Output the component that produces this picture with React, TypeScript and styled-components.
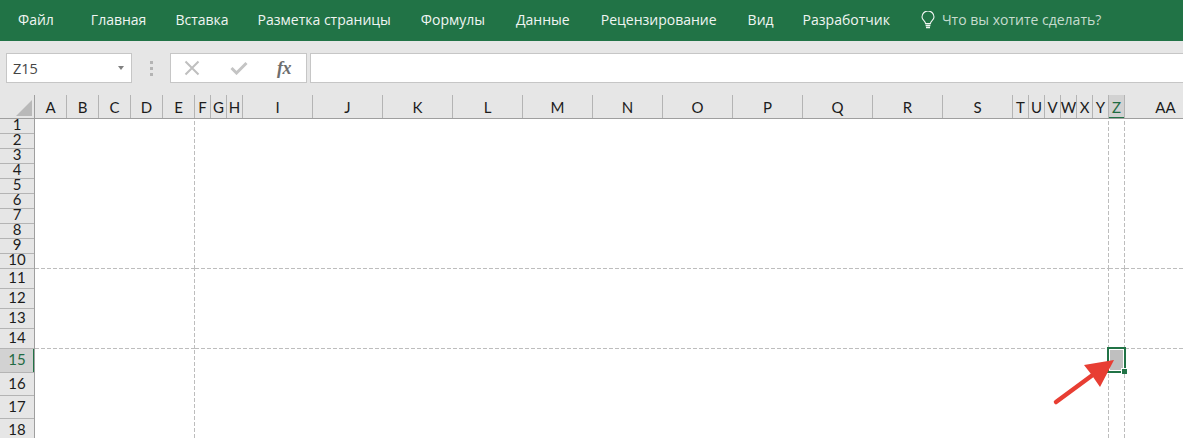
import React from "react";
import styled, { createGlobalStyle } from "styled-components";

const GlobalStyle = createGlobalStyle`
  html, body {
    margin: 0;
    height: 438px;
    overflow: hidden;
    background: #fff;
  }
`;

const Page = styled.div`
  width: 1183px;
  height: 438px;
  overflow: hidden;
  position: relative;
  display: flex;
  flex-direction: column;
`;

const Ribbon = styled.nav`
  height: 41px;
  flex: none;
  box-sizing: border-box;
  background: #217346;
  display: flex;
  align-items: center;
  padding: 0 0 2px 18px;
  font: 14px "Open Sans", "Noto Sans", sans-serif;
  color: #f0f5f2;
`;

const Tab = styled.span<{ $after: number }>`
  margin-right: ${p => p.$after}px;
  white-space: nowrap;
`;

const Tell = styled.span`
  display: flex;
  align-items: center;
  gap: 7px;
  color: #c6dccf;
`;

const Toolbar = styled.div`
  height: 54px;
  flex: none;
  background: #e6e6e6;
  box-sizing: border-box;
  padding: 12px 0 12px 6px;
  display: flex;
  align-items: stretch;
`;

const Field = styled.div<{ $width?: number }>`
  box-sizing: border-box;
  background: #fff;
  border: 1px solid #c6c6c6;
  display: flex;
  align-items: center;
  ${p => (p.$width ? `width: ${p.$width}px;` : "flex: 1; margin-right: -2px;")}
`;

const NameBox = styled(Field)`
  justify-content: space-between;
  padding: 0 7px 0 6px;
  font: 14.5px "Open Sans", "Noto Sans", sans-serif;
  color: #444;
`;

const Caret = styled.i`
  width: 0;
  height: 0;
  border-left: 3.5px solid transparent;
  border-right: 3.5px solid transparent;
  border-top: 4px solid #808080;
`;

const Grip = styled.div`
  width: 38px;
  display: flex;
  flex-direction: column;
  align-items: center;
  justify-content: center;
  gap: 3px;
  i {
    width: 3px;
    height: 3px;
    background: #b4b4b4;
  }
`;

const Buttons = styled(Field)`
  justify-content: space-between;
  padding: 0 15px 0 13px;
  margin-right: 3px;
`;

const Fx = styled.span`
  font: italic bold 18px "Liberation Serif", serif;
  color: #6e6e6e;
  letter-spacing: -0.5px;
`;

const Sheet = styled.div`
  flex: 1;
  display: grid;
  grid-template-columns: 35px 1fr;
  grid-template-rows: 24px 1fr;
  min-height: 0;
`;

const Corner = styled.div`
  background: #e6e6e6;
  box-sizing: border-box;
  border-right: 1px solid #9f9f9f;
  border-bottom: 1px solid #9f9f9f;
  display: flex;
  align-items: flex-end;
  justify-content: flex-end;
  padding: 0 2px 2px 0;
`;

const ColHeads = styled.div`
  display: flex;
  overflow: hidden;
  background: #e6e6e6;
  box-sizing: border-box;
  border-bottom: 1px solid #9f9f9f;
`;

const ColHead = styled.div<{ $width: number; $active?: boolean }>`
  flex: none;
  width: ${p => p.$width}px;
  box-sizing: border-box;
  border-right: 1px solid #b4b4b4;
  display: flex;
  align-items: center;
  justify-content: center;
  font: 15px Lato, "Liberation Sans", sans-serif;
  color: ${p => (p.$active ? "#1f6b43" : "#1c1c1c")};
  background: ${p => (p.$active ? "#d2d2d2" : "transparent")};
  ${p => (p.$active ? "box-shadow: 0 1px 0 #217346, inset 0 -1px 0 #217346;" : "")}
`;

const RowHeads = styled.div`
  background: #e6e6e6;
  box-sizing: border-box;
  border-right: 1px solid #9f9f9f;
  overflow: hidden;
`;

const RowHead = styled.div<{ $height: number; $active?: boolean }>`
  height: ${p => p.$height}px;
  box-sizing: border-box;
  padding-bottom: ${p => (p.$height < 20 ? 4 : 2)}px;
  border-bottom: 1px solid #b4b4b4;
  display: flex;
  align-items: center;
  justify-content: center;
  font: 15px/13px Lato, "Liberation Sans", sans-serif;
  color: ${p => (p.$active ? "#1f6b43" : "#1c1c1c")};
  background: ${p => (p.$active ? "#d2d2d2" : "transparent")};
  ${p => (p.$active ? "box-shadow: inset -1px 0 0 #217346, 1px 0 0 #217346;" : "")}
`;

const Panes = styled.div`
  display: grid;
  grid-template-columns: 160px 914px 16px 1fr;
  grid-template-rows: 150px 80px 1fr;
  background: #fff;
  min-height: 0;
`;

const dashH = "repeating-linear-gradient(90deg, #bdbdbd 0 4px, transparent 4px 6px)";
const dashV = "repeating-linear-gradient(0deg, #bdbdbd 0 4px, transparent 4px 6px)";

const Pane = styled.div<{ $right: boolean; $bottom: boolean }>`
  background-image: ${p => (p.$right ? dashV : "none")}, ${p => (p.$bottom ? dashH : "none")};
  background-size: 1px 100%, 100% 1px;
  background-position: right top, left bottom;
  background-repeat: no-repeat;
`;

const Selection = styled.div`
  position: absolute;
  left: 1107px;
  top: 347px;
  width: 19px;
  height: 26px;
  box-sizing: border-box;
  border: 2px solid #217346;
  background: #bfbfbf;
  box-shadow: inset 0 0 0 1px #fff;
  &::after {
    content: "";
    position: absolute;
    right: -3px;
    bottom: -3px;
    width: 5px;
    height: 5px;
    background: #217346;
    border: 1px solid #fff;
    border-right: 0;
    border-bottom: 0;
  }
`;

const Arrow = styled.svg`
  position: absolute;
  left: 1040px;
  top: 350px;
`;

const tabs: [string, number][] = [
  ["Файл", 37],
  ["Главная", 29],
  ["Вставка", 29],
  ["Разметка страницы", 30],
  ["Формулы", 31],
  ["Данные", 31],
  ["Рецензирование", 31],
  ["Вид", 29],
  ["Разработчик", 31],
];

const singles = "ABCDEFGHIJKLMNOPQRSTUVWXYZ".split("");
const columns: [string, number][] = singles.map(name => {
  if ("ABCDE".includes(name)) return [name, 32];
  if ("FGHTUVWXYZ".includes(name)) return [name, 16];
  return [name, 70];
});
columns.push(["AA", 82]);

const rowHeights = [15, 15, 15, 15, 15, 15, 15, 15, 15, 15, 20, 20, 20, 20, 24, 23, 23, 23];

export default function App() {
  return (
    <Page>
      <GlobalStyle />
      <Ribbon>
        {tabs.map(([name, after]) => (
          <Tab key={name} $after={after}>
            {name}
          </Tab>
        ))}
        <Tell>
          <svg width="14" height="18" viewBox="0 0 14 18" fill="none" stroke="#f0f5f2" strokeWidth="1.1">
            <path d="M4.6 12.6C4.4 10 1 9.2 1 6a6 6 0 0 1 12 0c0 3.2-3.4 4-3.6 6.6z" />
            <path d="M4.6 14.4h4.8M5 16.6h4" strokeWidth="1.5" />
          </svg>
          Что вы хотите сделать?
        </Tell>
      </Ribbon>
      <Toolbar>
        <NameBox $width={126}>
          Z15
          <Caret />
        </NameBox>
        <Grip>
          <i />
          <i />
          <i />
        </Grip>
        <Buttons $width={137}>
          <svg width="16" height="16" viewBox="0 0 16 16" stroke="#bfbfbf" strokeWidth="2" fill="none">
            <path d="M1.5 1.5l13 13M14.5 1.5l-13 13" />
          </svg>
          <svg width="18" height="14" viewBox="0 0 18 14" stroke="#c4c4c4" strokeWidth="3" fill="none">
            <path d="M1.5 7l5 5L16.5 2" />
          </svg>
          <Fx>fx</Fx>
        </Buttons>
        <Field />
      </Toolbar>
      <Sheet>
        <Corner>
          <svg width="16" height="16" viewBox="0 0 16 16">
            <path d="M16 0v16H0z" fill="#b9b9b9" />
          </svg>
        </Corner>
        <ColHeads>
          {columns.map(([name, width]) => (
            <ColHead key={name} $width={width} $active={name === "Z"}>
              {name}
            </ColHead>
          ))}
        </ColHeads>
        <RowHeads>
          {rowHeights.map((height, i) => (
            <RowHead key={i} $height={height} $active={i === 14}>
              {i + 1}
            </RowHead>
          ))}
        </RowHeads>
        <Panes>
          {Array.from({ length: 12 }, (_, i) => (
            <Pane key={i} $right={i % 4 !== 3} $bottom={i < 8} />
          ))}
        </Panes>
      </Sheet>
      <Selection />
      <Arrow width="90" height="60" viewBox="0 0 90 60">
        <path d="M16 52L54 24" stroke="#e83e33" strokeWidth="4.5" strokeLinecap="round" fill="none" />
        <path d="M74 10L44 15L51 24L60 37z" fill="#e83e33" />
      </Arrow>
    </Page>
  );
}
